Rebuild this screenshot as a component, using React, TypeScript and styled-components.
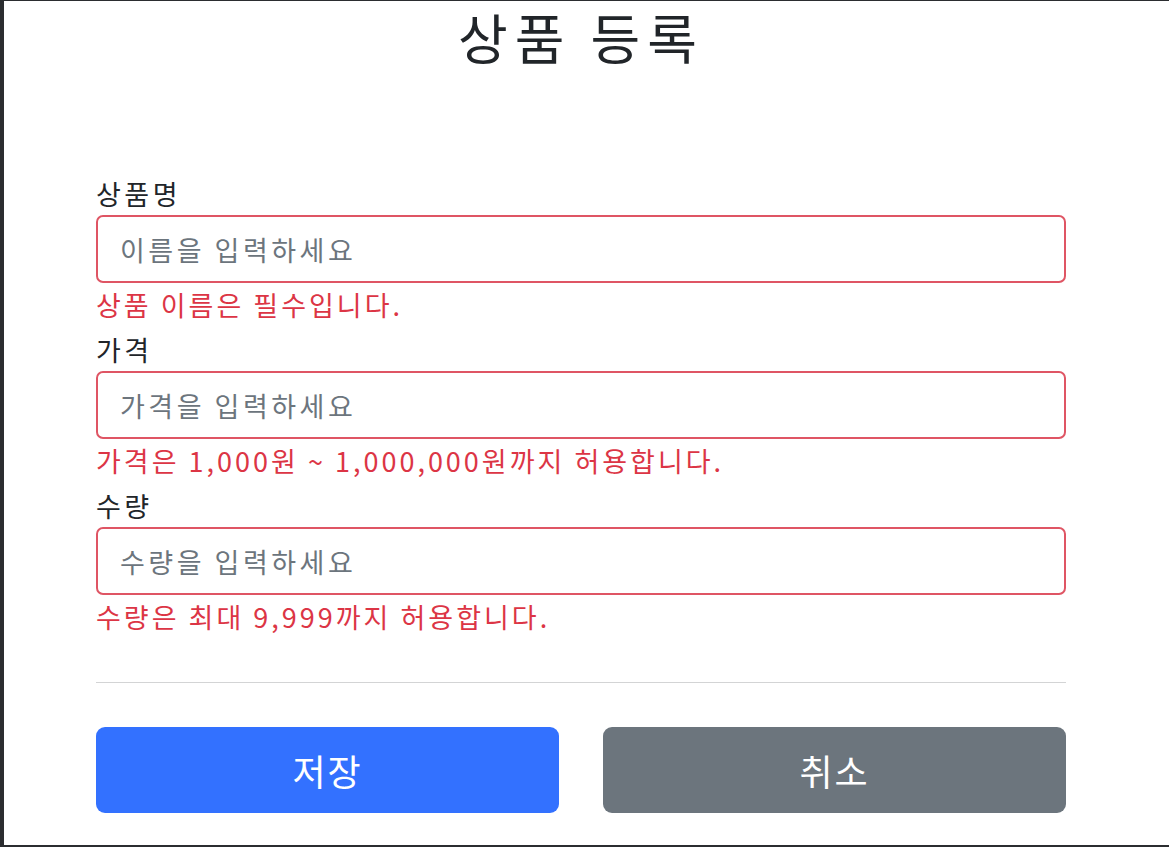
import React, {FC} from 'react';
import styled, {createGlobalStyle} from 'styled-components';

const GlobalStyle = createGlobalStyle`
    html, body {
        margin: 0;
        padding: 0;
        height: 100%;
    }
    body {
        background: #2b2d30;
        font-family: "Noto Sans CJK KR", "Noto Sans", sans-serif;
        color: #212529;
    }
    #root {
        height: 100%;
    }
`;

const Frame = styled.div`
    box-sizing: border-box;
    height: 100vh;
    padding: 1px 0 2px 4px;
    display: flex;
`;

const Page = styled.div`
    flex: 1;
    background: #ffffff;
    overflow: hidden;
    padding-left: 92px;
`;

const Container = styled.div`
    width: 970px;
`;

const Title = styled.h2`
    margin: 4px 0 104px;
    text-align: center;
    font-size: 54px;
    font-weight: 400;
    line-height: 64px;
    letter-spacing: 7px;
    color: #212529;
`;

const Field = styled.div`
    & + & {
        margin-top: 3px;
    }
`;

const Label = styled.label`
    display: block;
    font-size: 27px;
    line-height: 42px;
    letter-spacing: 3.5px;
    color: #212529;
`;

const Input = styled.input`
    display: block;
    box-sizing: border-box;
    width: 100%;
    height: 68px;
    padding: 0 22px;
    font-family: inherit;
    font-size: 27px;
    letter-spacing: 3.5px;
    color: #212529;
    background: #ffffff;
    border: 2px solid #df5564;
    border-radius: 7px;
    outline: none;

    &::placeholder {
        color: #6c757d;
    }
`;

const FieldError = styled.div`
    font-size: 27px;
    line-height: 43px;
    letter-spacing: 3px;
    color: #dc3545;
`;

const Divider = styled.hr`
    margin: 44px 0 44px;
    border: 0;
    border-top: 1.5px solid #d3d4d5;
`;

const ButtonRow = styled.div`
    display: grid;
    grid-template-columns: 1fr 1fr;
    gap: 44px;
`;

const Button = styled.button<{variant: 'primary' | 'secondary'}>`
    height: 86px;
    border: 0;
    border-radius: 9px;
    font-family: inherit;
    font-size: 36px;
    letter-spacing: 2px;
    color: #ffffff;
    background: ${(p) => (p.variant === 'primary' ? '#3371ff' : '#6c757d')};
    cursor: pointer;
`;

interface FieldProps {
    label: string;
    placeholder: string;
    error: string;
}

const fields: FieldProps[] = [
    {label: '상품명', placeholder: '이름을 입력하세요', error: '상품 이름은 필수입니다.'},
    {label: '가격', placeholder: '가격을 입력하세요', error: '가격은 1,000원 ~ 1,000,000원까지 허용합니다.'},
    {label: '수량', placeholder: '수량을 입력하세요', error: '수량은 최대 9,999까지 허용합니다.'},
];

const FormField: FC<FieldProps> = ({label, placeholder, error}) => (
    <Field>
        <Label>{label}</Label>
        <Input placeholder={placeholder}/>
        <FieldError>{error}</FieldError>
    </Field>
);

const App: FC = () => {
    return (
        <>
            <GlobalStyle/>
            <Frame>
                <Page>
                    <Container>
                        <Title>{'상품 등록'}</Title>
                        <form onSubmit={(e) => e.preventDefault()}>
                            {fields.map((f) => (
                                <FormField
                                    key={f.label}
                                    {...f}
                                />
                            ))}
                            <Divider/>
                            <ButtonRow>
                                <Button
                                    type='submit'
                                    variant='primary'
                                >
                                    {'저장'}
                                </Button>
                                <Button
                                    type='button'
                                    variant='secondary'
                                >
                                    {'취소'}
                                </Button>
                            </ButtonRow>
                        </form>
                    </Container>
                </Page>
            </Frame>
        </>
    );
};

export default App;
